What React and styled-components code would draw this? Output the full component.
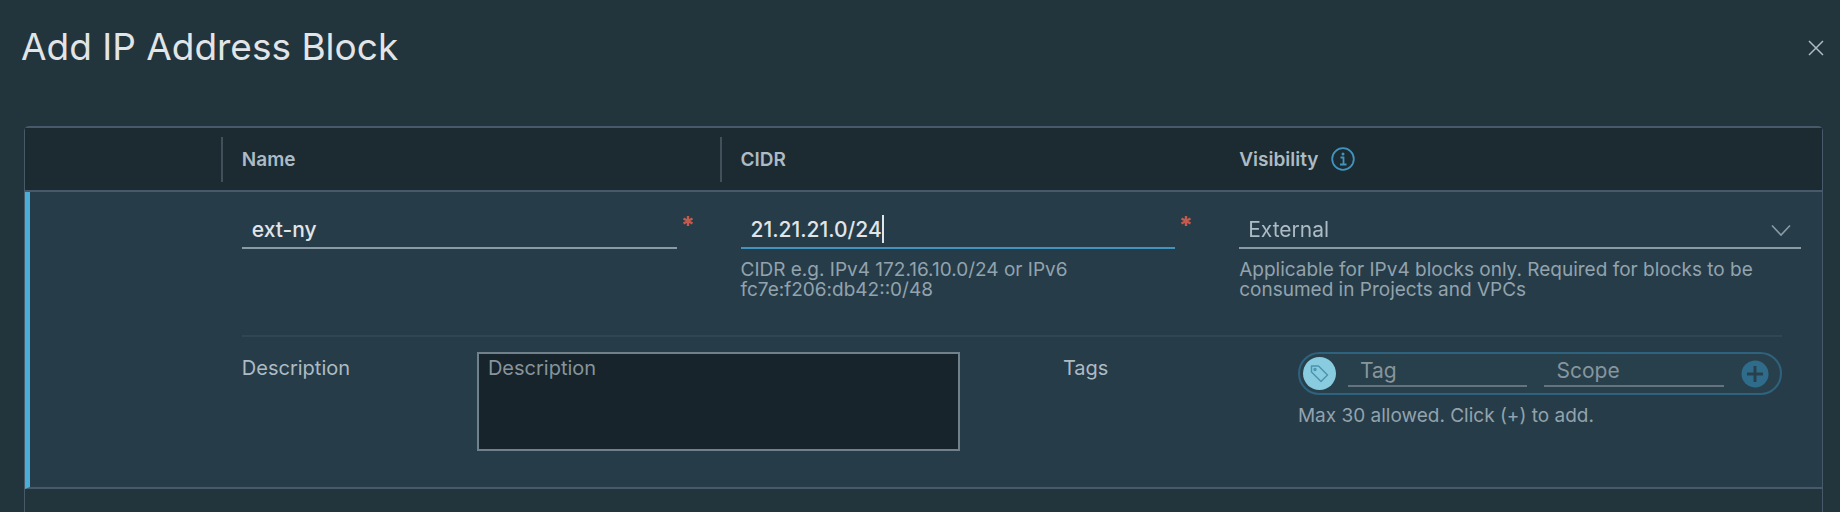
import React, { useLayoutEffect, useRef, useState } from "react";
import styled, { createGlobalStyle, css } from "styled-components";

const line = "#485969";

const GlobalStyle = createGlobalStyle`
  *, *::before, *::after { box-sizing: border-box; }
  body {
    margin: 0;
    background: #22343c;
    color: #adbbc4;
    font-family: Inter, "Liberation Sans", sans-serif;
    font-size: 20px;
  }
  input, textarea, select, button { font: inherit; color: inherit; }
`;

const Dialog = styled.main`
  min-height: 100vh;
  display: flex;
  flex-direction: column;
  padding: 0 16px 0 24px;
`;

const Header = styled.header`
  display: flex;
  align-items: center;
  justify-content: space-between;
  height: 96px;
  margin-bottom: 30px;
`;

const Title = styled.h1`
  margin: 0 0 2px -3px;
  font-size: 37px;
  line-height: 44px;
  font-weight: 400;
  color: #e1e5e8;
`;

const IconButton = styled.button`
  display: flex;
  padding: 0;
  border: 0;
  background: none;
  cursor: pointer;
`;

const CloseIcon = styled.svg`
  width: 16px;
  height: 16px;
  fill: none;
  stroke: #adbbc4;
  stroke-width: 1.5;
`;

const Panel = styled.section`
  flex: 1;
  margin-right: 1px;
  border: 2px solid ${line};
  border-width: 2px 1px 0;
  border-radius: 5px 5px 0 0;
`;

const Grid = styled.table`
  width: 100%;
  border-collapse: separate;
  border-spacing: 0;
  table-layout: fixed;
`;

const Col = styled.col`
  width: ${(p) => p.$width};
`;

const HeadCell = styled.th`
  height: 64px;
  padding: 0;
  border-bottom: 2px solid ${line};
  background: #1c2a32;
  font-size: 19px;
  font-weight: 600;
  text-align: left;
`;

const HeadLabel = styled.div`
  display: flex;
  align-items: center;
  gap: 13px;
  height: 45px;
  padding-left: 19px;
  border-left: 2px solid ${(p) => (p.$divided ? "#42505a" : "transparent")};
`;

const InfoIcon = styled.svg`
  width: 24px;
  height: 24px;
  fill: none;
  stroke: #4094bd;
`;

const Cell = styled.td`
  padding: 0;
  vertical-align: top;
  background: #273c49;
`;

const Marker = styled(Cell)`
  border-left: 5px solid #49afd9;
  border-bottom: 2px solid ${line};
`;

const DetailCell = styled(Cell)`
  padding: 0 40px 36px 21px;
  border-bottom: 2px solid ${line};
`;

const Field = styled.div`
  height: 143px;
  padding: 21px ${(p) => (p.$wide ? 21 : 43)}px 0 21px;
`;

const Control = styled.div`
  position: relative;
`;

const underline = css`
  display: block;
  width: 100%;
  height: 36px;
  border: 0;
  border-bottom: 2px solid #8a9ba5;
  border-radius: 0;
  background: transparent;
  font-size: 21px;
  outline: none;
`;

const TextInput = styled.input`
  ${underline}
  padding: 0 10px 2px;
  font-weight: 500;
  color: #e1e5e8;
  caret-color: transparent;
  &:focus { border-bottom-color: #4094bd; }
`;

const Caret = styled.span`
  position: absolute;
  top: 2px;
  width: 2px;
  height: 28px;
  background: #e1e5e8;
  pointer-events: none;
`;

const Select = styled.select`
  ${underline}
  appearance: none;
  padding: 0 32px 2px 9px;
`;

const Chevron = styled.svg`
  position: absolute;
  right: 10px;
  top: 11px;
  width: 20px;
  height: 14px;
  fill: none;
  stroke: #8a9ba5;
  stroke-width: 1.6;
  pointer-events: none;
`;

const Required = styled.svg`
  position: absolute;
  right: -17px;
  top: 2px;
  width: 12px;
  height: 12px;
  stroke: #c25a4e;
  stroke-width: 2.4;
`;

const Hint = styled.p`
  margin: 11px 0 0;
  font-size: 19px;
  line-height: 20px;
  color: #92a3ad;
`;

const Details = styled.div`
  display: grid;
  grid-template-columns: minmax(0, 235fr) minmax(0, 586fr) minmax(0, 235fr) minmax(0, 484fr);
  align-items: start;
  padding-top: 15px;
  border-top: 2px solid #324552;
`;

const Label = styled.label`
  padding-top: 4px;
  line-height: 24px;
`;

const TextArea = styled.textarea`
  display: block;
  width: calc(100% - 103px);
  height: 99px;
  padding: 2px 9px;
  border: 2px solid #71818b;
  border-radius: 0;
  background: #18242b;
  line-height: 24px;
  outline: none;
  resize: none;
  &::placeholder { color: #87949b; opacity: 1; }
`;

const TagBox = styled.div`
  display: flex;
  align-items: center;
  height: 43px;
  padding: 0 11px 0 3px;
  border: 2px solid #2e627e;
  border-radius: 22px;
  background: #28404b;
`;

const TagBadge = styled.span`
  display: flex;
  flex: none;
  width: 33px;
  height: 33px;
  margin-right: 12px;
  border-radius: 50%;
  background: #89cbdf;
`;

const TagIcon = styled.svg`
  width: 33px;
  height: 33px;
  fill: none;
  stroke: #4a93ad;
  stroke-width: 1.4;
`;

const TagInput = styled.input`
  flex: 1;
  min-width: 0;
  height: 27px;
  margin-right: 17px;
  padding: 0 12px 5px;
  border: 0;
  border-bottom: 2px solid #64737c;
  background: transparent;
  font-size: 21px;
  line-height: 20px;
  outline: none;
  &::placeholder { color: #87959d; opacity: 1; }
`;

const PlusIcon = styled.svg`
  width: 28px;
  height: 28px;
  fill: #2f6c8c;
  stroke: #28404b;
  stroke-width: 3;
`;

function RequiredMark() {
  return (
    <Required viewBox="0 0 12 12" aria-hidden="true">
      <path d="M6 1v10M1.5 3.5l9 5M10.5 3.5l-9 5" />
    </Required>
  );
}

export default function App() {
  const cidrRef = useRef(null);
  const [name, setName] = useState("ext-ny");
  const [cidr, setCidr] = useState("21.21.21.0/24");
  const [caretX, setCaretX] = useState(0);
  const [focused, setFocused] = useState(true);

  useLayoutEffect(() => {
    cidrRef.current.focus();
  }, []);

  // Keep the steady caret at the end of the typed value.
  useLayoutEffect(() => {
    const style = getComputedStyle(cidrRef.current);
    const ctx = document.createElement("canvas").getContext("2d");
    ctx.font = `${style.fontWeight} ${style.fontSize} ${style.fontFamily}`;
    setCaretX(parseInt(style.paddingLeft, 10) + Math.round(ctx.measureText(cidr).width));
  }, [cidr]);

  return (
    <>
      <GlobalStyle />
      <Dialog>
        <Header>
          <Title>Add IP Address Block</Title>
          <IconButton type="button" aria-label="Close">
            <CloseIcon viewBox="0 0 16 16">
              <path d="M1 1l14 14M15 1L1 15" />
            </CloseIcon>
          </IconButton>
        </Header>
        <Panel>
          <Grid>
            <colgroup>
              <Col $width="10.9%" />
              <Col $width="27.75%" />
              <Col $width="27.75%" />
              <Col $width="33.6%" />
            </colgroup>
            <thead>
              <tr>
                <HeadCell />
                <HeadCell scope="col"><HeadLabel $divided>Name</HeadLabel></HeadCell>
                <HeadCell scope="col"><HeadLabel $divided>CIDR</HeadLabel></HeadCell>
                <HeadCell scope="col">
                  <HeadLabel>
                    Visibility
                    <InfoIcon viewBox="0 0 24 24" aria-hidden="true">
                      <circle cx="12" cy="12" r="10.8" strokeWidth="1.8" />
                      <path d="M9.5 10.5h3v7M9 17.5h6.5" strokeWidth="1.8" />
                      <circle cx="12" cy="7" r="1.5" fill="#4094bd" stroke="none" />
                    </InfoIcon>
                  </HeadLabel>
                </HeadCell>
              </tr>
            </thead>
            <tbody>
              <tr>
                <Marker rowSpan={2} />
                <Cell>
                  <Field>
                    <Control>
                      <TextInput aria-label="Name" required value={name} onChange={(e) => setName(e.target.value)} />
                      <RequiredMark />
                    </Control>
                  </Field>
                </Cell>
                <Cell>
                  <Field>
                    <Control>
                      <TextInput
                        ref={cidrRef}
                        aria-label="CIDR"
                        aria-describedby="cidr-hint"
                        required
                        value={cidr}
                        onChange={(e) => setCidr(e.target.value)}
                        onFocus={() => setFocused(true)}
                        onBlur={() => setFocused(false)}
                      />
                      {focused && <Caret style={{ left: caretX }} />}
                      <RequiredMark />
                    </Control>
                    <Hint id="cidr-hint">CIDR e.g. IPv4 172.16.10.0/24 or IPv6 fc7e:f206:db42::0/48</Hint>
                  </Field>
                </Cell>
                <Cell>
                  <Field $wide>
                    <Control>
                      <Select aria-label="Visibility" aria-describedby="visibility-hint">
                        <option>External</option>
                      </Select>
                      <Chevron viewBox="0 0 20 14" aria-hidden="true">
                        <path d="M1 1.5l9 9.5 9-9.5" />
                      </Chevron>
                    </Control>
                    <Hint id="visibility-hint">
                      Applicable for IPv4 blocks only. Required for blocks to be consumed in Projects and VPCs
                    </Hint>
                  </Field>
                </Cell>
              </tr>
              <tr>
                <DetailCell colSpan={3}>
                  <Details>
                    <Label htmlFor="description">Description</Label>
                    <TextArea id="description" placeholder="Description" />
                    <Label htmlFor="tag">Tags</Label>
                    <div>
                      <TagBox>
                        <TagBadge>
                          <TagIcon viewBox="0 0 33 33" aria-hidden="true">
                            <path d="M8.5 9h7l9 9-6.5 6.5-9.5-9.5z" strokeLinejoin="round" />
                            <circle cx="12" cy="12.5" r="1" />
                          </TagIcon>
                        </TagBadge>
                        <TagInput id="tag" placeholder="Tag" />
                        <TagInput aria-label="Scope" placeholder="Scope" />
                        <IconButton type="button" aria-label="Add tag">
                          <PlusIcon viewBox="0 0 28 28">
                            <circle cx="14" cy="14" r="13.5" stroke="none" />
                            <path d="M14 6v16M6 14h16" />
                          </PlusIcon>
                        </IconButton>
                      </TagBox>
                      <Hint>Max 30 allowed. Click (+) to add.</Hint>
                    </div>
                  </Details>
                </DetailCell>
              </tr>
            </tbody>
          </Grid>
        </Panel>
      </Dialog>
    </>
  );
}
